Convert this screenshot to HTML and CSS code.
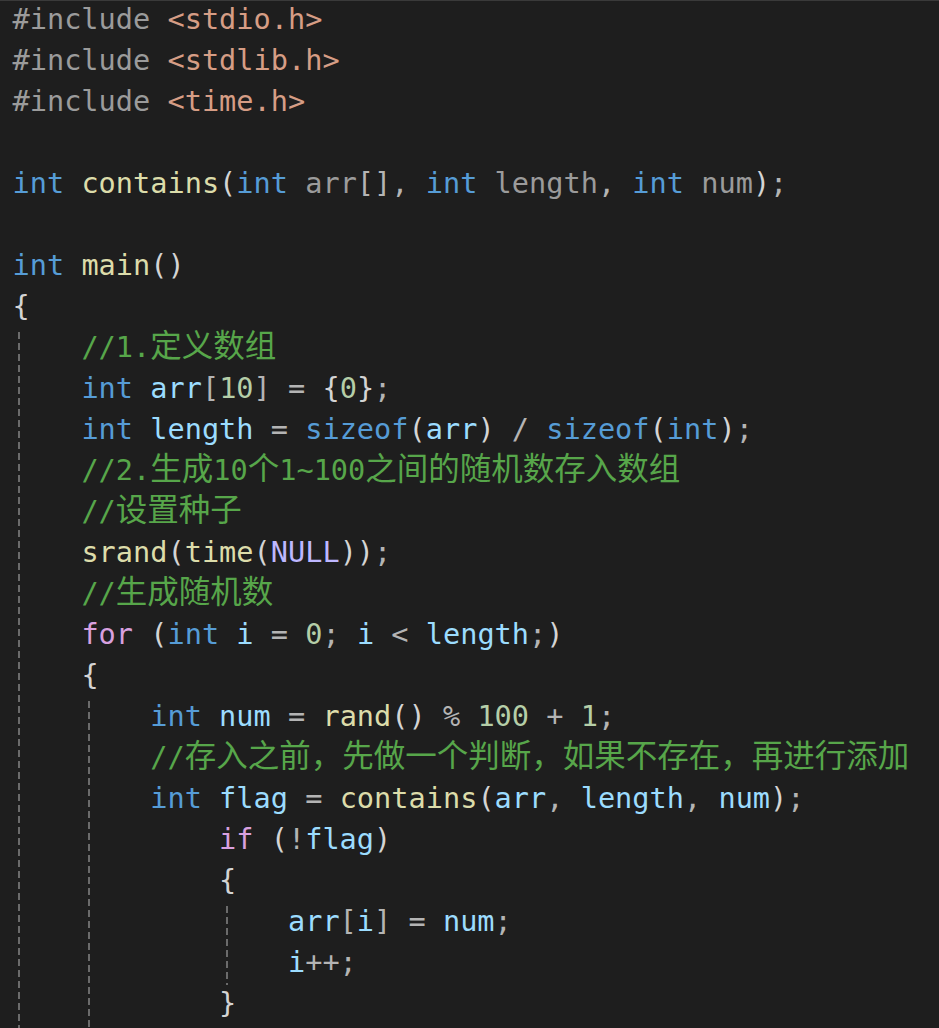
FILE: index.html
```html
<!DOCTYPE html>
<html lang="zh-CN">
<head>
<meta charset="utf-8">
<title>main.c</title>
<link rel="stylesheet" href="styles.css">
</head>
<body>
<div class="editor">
  <div class="line"><span class="pp">#include</span> <span class="str">&lt;stdio.h&gt;</span></div>
  <div class="line"><span class="pp">#include</span> <span class="str">&lt;stdlib.h&gt;</span></div>
  <div class="line"><span class="pp">#include</span> <span class="str">&lt;time.h&gt;</span></div>
  <div class="line"></div>
  <div class="line"><span class="kw">int</span> <span class="fn">contains</span><span class="br">(</span><span class="kw">int</span> <span class="dim">arr</span><span class="pn">[]</span><span class="pn">,</span> <span class="kw">int</span> <span class="dim">length</span><span class="pn">,</span> <span class="kw">int</span> <span class="dim">num</span><span class="br">)</span><span class="pn">;</span></div>
  <div class="line"></div>
  <div class="line"><span class="kw">int</span> <span class="fn">main</span><span class="br">()</span></div>
  <div class="line"><span class="br">{</span></div>
  <div class="block g0">
    <div class="line">    <span class="cm">//1.<span class="cjk">定义数组</span></span></div>
    <div class="line">    <span class="kw">int</span> <span class="var">arr</span><span class="pn">[</span><span class="num">10</span><span class="pn">]</span> <span class="pn">=</span> <span class="br">{</span><span class="num">0</span><span class="br">}</span><span class="pn">;</span></div>
    <div class="line">    <span class="kw">int</span> <span class="var">length</span> <span class="pn">=</span> <span class="kw">sizeof</span><span class="br">(</span><span class="var">arr</span><span class="br">)</span> <span class="pn">/</span> <span class="kw">sizeof</span><span class="br">(</span><span class="kw">int</span><span class="br">)</span><span class="pn">;</span></div>
    <div class="line">    <span class="cm">//2.<span class="cjk">生成</span>10<span class="cjk">个</span>1~100<span class="cjk">之间的随机数存入数组</span></span></div>
    <div class="line">    <span class="cm">//<span class="cjk">设置种子</span></span></div>
    <div class="line">    <span class="fn">srand</span><span class="br">(</span><span class="fn">time</span><span class="br">(</span><span class="mac">NULL</span><span class="br">))</span><span class="pn">;</span></div>
    <div class="line">    <span class="cm">//<span class="cjk">生成随机数</span></span></div>
    <div class="line">    <span class="ctl">for</span> <span class="br">(</span><span class="kw">int</span> <span class="var">i</span> <span class="pn">=</span> <span class="num">0</span><span class="pn">;</span> <span class="var">i</span> <span class="pn">&lt;</span> <span class="var">length</span><span class="pn">;</span><span class="br">)</span></div>
    <div class="line">    <span class="br">{</span></div>
    <div class="block g1">
      <div class="line">        <span class="kw">int</span> <span class="var">num</span> <span class="pn">=</span> <span class="fn">rand</span><span class="br">()</span> <span class="pn">%</span> <span class="num">100</span> <span class="pn">+</span> <span class="num">1</span><span class="pn">;</span></div>
      <div class="line">        <span class="cm">//<span class="cjk">存入之前，先做一个判断，如果不存在，再进行添加</span></span></div>
      <div class="line">        <span class="kw">int</span> <span class="var">flag</span> <span class="pn">=</span> <span class="fn">contains</span><span class="br">(</span><span class="var">arr</span><span class="pn">,</span> <span class="var">length</span><span class="pn">,</span> <span class="var">num</span><span class="br">)</span><span class="pn">;</span></div>
      <div class="line">            <span class="ctl">if</span> <span class="br">(</span><span class="pn">!</span><span class="var">flag</span><span class="br">)</span></div>
      <div class="line">            <span class="br">{</span></div>
      <div class="block g2">
        <div class="line">                <span class="var">arr</span><span class="pn">[</span><span class="var">i</span><span class="pn">]</span> <span class="pn">=</span> <span class="var">num</span><span class="pn">;</span></div>
        <div class="line">                <span class="var">i</span><span class="pn">++;</span></div>
      </div>
      <div class="line">            <span class="br">}</span></div>
      <div class="line"></div>
      <div class="line"></div>
    </div>
  </div>
</div>
</body>
</html>
```

FILE: styles.css
```css
html, body {
  margin: 0;
  padding: 0;
  background: #1e1e1e;
  overflow: hidden;
}

.editor {
  height: 100vh;
  overflow: hidden;
  box-sizing: border-box;
  border-top: 1px solid #3a3a3a;
  padding-left: 12.5px;
  font-family: "DejaVu Sans Mono", "Liberation Mono", monospace;
  font-size: 28.6px;
  color: #d4d4d4;
}

.line {
  height: 41px;
  line-height: 37px;
  white-space: pre;
}

.block {
  margin-left: -12.5px;
  padding-left: 12.5px;
  background-image: linear-gradient(to bottom, #6b6b6b 0, #6b6b6b 7px, transparent 7px);
  background-size: 2px 11px;
  background-repeat: repeat-y;
}

.g0 { background-position: 18px 3px; }
.g1 { background-position: 88px 3px; }
.g2 { background-position: 226px 3px; }

.cjk {
  font-family: "Noto Sans CJK SC", "Noto Sans CJK JP", sans-serif;
  font-size: 31.5px;
  line-height: 0;
}

.pp  { color: #9b9b9b; }
.str { color: #d69d85; }
.kw  { color: #569cd6; }
.fn  { color: #dcdcaa; }
.var { color: #9cdcfe; }
.dim { color: #9b9b9b; }
.pn  { color: #b4b4b4; }
.br  { color: #d4d4d4; }
.num { color: #b5cea8; }
.cm  { color: #57a64a; }
.ctl { color: #d8a0df; }
.mac { color: #beb7ff; }
```
